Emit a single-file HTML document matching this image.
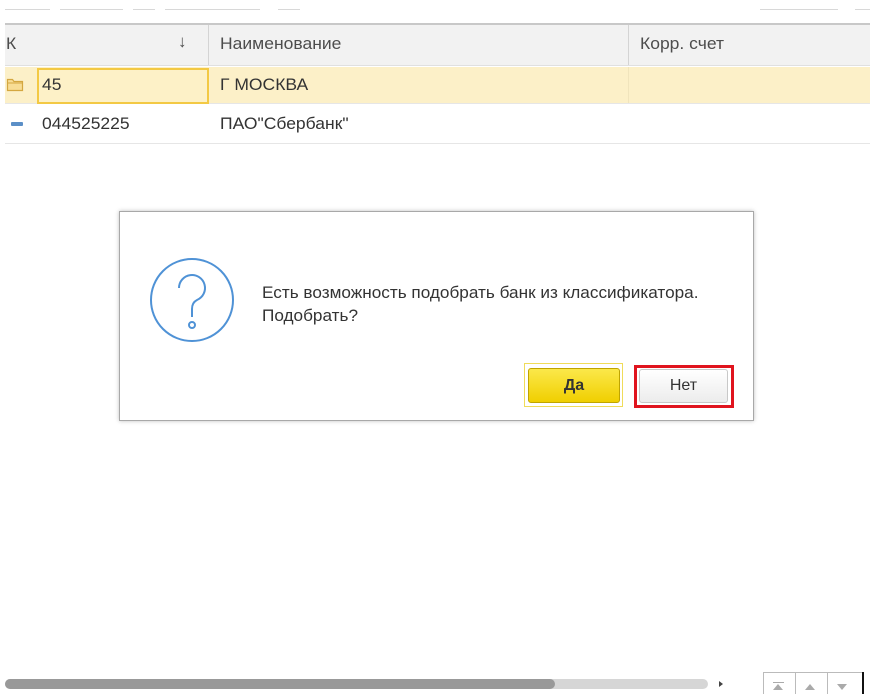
<!DOCTYPE html>
<html><head><meta charset="utf-8"><style>
body{margin:0;width:870px;height:694px;background:#fff;position:relative;overflow:hidden;font-family:"Liberation Sans",Arial,sans-serif;color:#4d4d4d}
.a{position:absolute}
.t{font-size:17px;transform:scaleX(1.03);transform-origin:left;line-height:20px}
.dash{position:absolute;top:9px;height:1px;background:#d8d8d8}
</style></head><body>
<div class="dash" style="left:5px;width:45px"></div>
<div class="dash" style="left:60px;width:63px"></div>
<div class="dash" style="left:133px;width:22px"></div>
<div class="dash" style="left:165px;width:95px"></div>
<div class="dash" style="left:278px;width:22px"></div>
<div class="dash" style="left:760px;width:78px"></div>
<div class="dash" style="left:855px;width:15px"></div>

<div class="a" style="left:5px;top:23px;width:865px;height:2px;background:#c8c8c8"></div>
<div class="a" style="left:5px;top:25px;width:865px;height:40px;background:#f2f2f2;border-bottom:1px solid #e0e0e0"></div>
<div class="a" style="left:208px;top:25px;width:1px;height:40px;background:#d4d4d4"></div>
<div class="a" style="left:628px;top:25px;width:1px;height:40px;background:#d4d4d4"></div>
<div class="a t" style="left:6px;top:34px">К</div>
<div class="a" style="left:178px;top:32px;font-size:17px">↓</div>
<div class="a t" style="left:220px;top:34px">Наименование</div>
<div class="a t" style="left:640px;top:34px">Корр. счет</div>

<div class="a" style="left:5px;top:67px;width:865px;height:36px;background:#fcf0c8;border-bottom:1px solid #e6e6e6"></div>
<div class="a" style="left:628px;top:67px;width:1px;height:36px;background:#f0e4bc"></div>
<div class="a" style="left:37px;top:68px;width:168px;height:32px;border:2px solid #f3c944;background:#fdf1c7"></div>
<svg class="a" style="left:6px;top:76px" width="18" height="16"><path d="M1.5 3.5h5l1.5 2h8.5v9h-15z" fill="#f8dd95" stroke="#d4a740" stroke-width="1.2"/><path d="M1.5 7h15" stroke="#d4a740"/></svg>
<div class="a t" style="left:42px;top:75px;color:#333">45</div>
<div class="a t" style="left:220px;top:75px;color:#333">Г МОСКВА</div>

<div class="a" style="left:5px;top:143px;width:865px;height:1px;background:#e6e6e6"></div>
<div class="a" style="left:11px;top:122px;width:12px;height:4px;background:#5b8fc7;border-radius:1px"></div>
<div class="a t" style="left:42px;top:114px;color:#333">044525225</div>
<div class="a t" style="left:220px;top:114px;color:#333">ПАО"Сбербанк"</div>

<div class="a" style="left:119px;top:211px;width:633px;height:208px;border:1px solid #a8a8a8;box-shadow:0 0 4px rgba(0,0,0,.25);background:#fff"></div>
<svg class="a" style="left:148px;top:256px" width="90" height="90"><circle cx="44" cy="44" r="41" fill="none" stroke="#4f92d6" stroke-width="2"/><path d="M31 32a13 13 0 1 1 18 12c-4 2-5 5-5 9v8" fill="none" stroke="#4f92d6" stroke-width="2"/><circle cx="44" cy="69" r="3" fill="none" stroke="#4f92d6" stroke-width="2"/></svg>
<div class="a" style="left:262px;top:281px;font-size:17px;line-height:23px;color:#333;transform:scaleX(1.01);transform-origin:left">Есть возможность подобрать банк из классификатора.<br>Подобрать?</div>

<div class="a" style="left:524px;top:363px;width:99px;height:44px;border:1px solid #f0dc5a;box-sizing:border-box"></div>
<div class="a" style="left:528px;top:368px;width:92px;height:35px;background:linear-gradient(#fbe84a,#f0cf00);border:1px solid #bfa400;border-radius:3px;box-sizing:border-box;text-align:center;line-height:33px;font-weight:bold;font-size:16px;color:#333">Да</div>
<div class="a" style="left:634px;top:365px;width:100px;height:43px;border:3px solid #e0141e;box-sizing:border-box"></div>
<div class="a" style="left:639px;top:369px;width:89px;height:34px;background:linear-gradient(#fff,#ececec);border:1px solid #c8c8c8;border-radius:3px;box-sizing:border-box;text-align:center;line-height:32px;font-size:16px;color:#333">Нет</div>

<div class="a" style="left:5px;top:679px;width:703px;height:10px;background:#d6d6d6;border-radius:5px"></div>
<div class="a" style="left:5px;top:679px;width:550px;height:10px;background:#999;border-radius:5px"></div>
<div class="a" style="left:719px;top:681px;width:0;height:0;border-left:4px solid #444;border-top:3px solid transparent;border-bottom:3px solid transparent"></div>
<div class="a" style="left:763px;top:672px;width:100px;height:22px;border:1px solid #bbb;border-bottom:none;box-sizing:border-box"></div>
<div class="a" style="left:795px;top:672px;width:1px;height:22px;background:#bbb"></div>
<div class="a" style="left:827px;top:672px;width:1px;height:22px;background:#bbb"></div>
<div class="a" style="left:862px;top:672px;width:2px;height:22px;background:#111"></div>
<div class="a" style="left:773px;top:682px;width:11px;height:1px;background:#aaa"></div>
<div class="a" style="left:773px;top:684px;border-left:5px solid transparent;border-right:5px solid transparent;border-bottom:6px solid #aaa"></div>
<div class="a" style="left:805px;top:684px;border-left:5px solid transparent;border-right:5px solid transparent;border-bottom:6px solid #aaa"></div>
<div class="a" style="left:837px;top:684px;border-left:5px solid transparent;border-right:5px solid transparent;border-top:6px solid #aaa"></div>
</body></html>
